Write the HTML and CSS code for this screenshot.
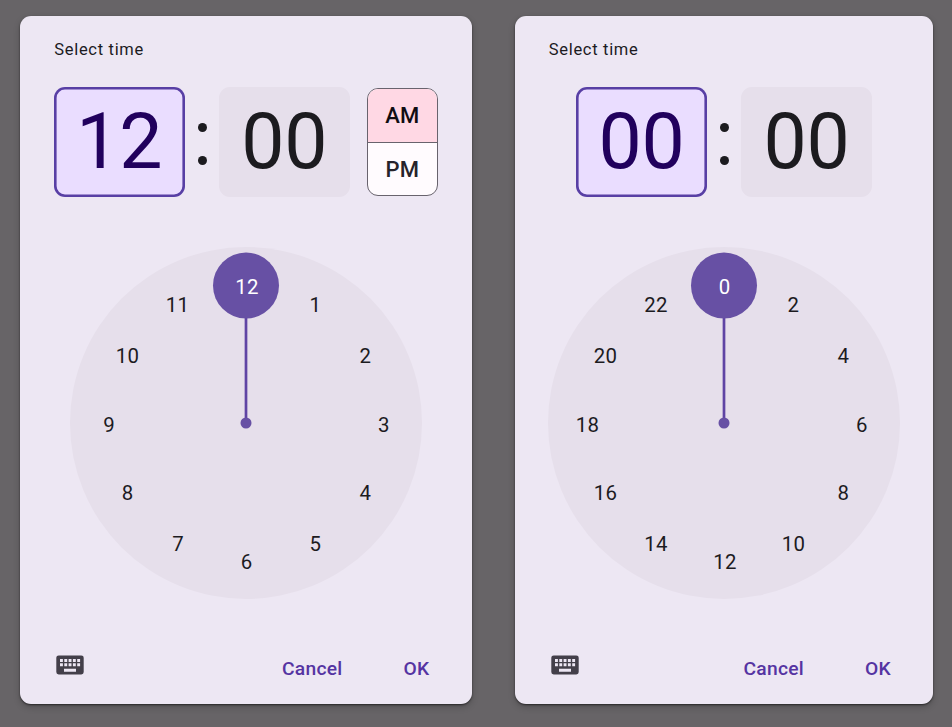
FILE: index.html
```html
<!DOCTYPE html>
<html lang="en">
<head>
<meta charset="utf-8">
<title>Select time</title>
<link rel="stylesheet" href="styles.css">
</head>
<body>
<svg width="0" height="0" class="defs" aria-hidden="true">
  <symbol id="keyboard" viewBox="0 0 28 20">
    <rect x="0.3" y="0.4" width="27.4" height="19" rx="2.4" fill="#433f49"/>
    <path fill="#ede7f3" d="M4 4h2.9v3H4zM8.3 4h2.9v3H8.3zM12.6 4h2.9v3h-2.9zM16.9 4h2.9v3h-2.9zM21.2 4h2.9v3h-2.9zM4 8.3h2.9v3H4zM8.3 8.3h2.9v3H8.3zM12.6 8.3h2.9v3h-2.9zM16.9 8.3h2.9v3h-2.9zM21.2 8.3h2.9v3h-2.9zM8 13.8h12v3H8z"/>
  </symbol>
</svg>
<main class="stage">
  <section class="dialog dialog-12h">
    <h1 class="title">Select time</h1>
    <div class="time-row">
      <div class="field selected">12</div>
      <div class="colon"><i></i><i></i></div>
      <div class="field">00</div>
      <div class="period"><div class="am">AM</div><div class="pm">PM</div></div>
    </div>
    <svg class="dial" viewBox="-176 -176 352 352">
      <circle class="face" r="176"/>
      <path class="hand" d="M0 0V-110"/>
      <circle class="knob" r="5.5"/>
      <circle class="knob" cy="-137.5" r="33"/>
      <text class="on" x="1" y="-129">12</text>
      <text x="69.5" y="-111">1</text>
      <text x="119.5" y="-60.5">2</text>
      <text x="138" y="8.5">3</text>
      <text x="119.5" y="77">4</text>
      <text x="69.5" y="127.5">5</text>
      <text x="0.5" y="146">6</text>
      <text x="-68" y="127.5">7</text>
      <text x="-118.5" y="77">8</text>
      <text x="-137" y="8.5">9</text>
      <text x="-118.5" y="-60.5">10</text>
      <text x="-68.5" y="-111">11</text>
    </svg>
    <div class="actions">
      <svg class="keyboard"><use href="#keyboard"/></svg>
      <span class="button cancel">Cancel</span>
      <span class="button">OK</span>
    </div>
  </section>
  <section class="dialog dialog-24h">
    <h1 class="title">Select time</h1>
    <div class="time-row">
      <div class="field selected">00</div>
      <div class="colon"><i></i><i></i></div>
      <div class="field">00</div>
    </div>
    <svg class="dial" viewBox="-176 -176 352 352">
      <circle class="face" r="176"/>
      <path class="hand" d="M0 0V-110"/>
      <circle class="knob" r="5.5"/>
      <circle class="knob" cy="-137.5" r="33"/>
      <text class="on" x="0.5" y="-129">0</text>
      <text x="69.5" y="-111">2</text>
      <text x="119.5" y="-60.5">4</text>
      <text x="138" y="8.5">6</text>
      <text x="119.5" y="77">8</text>
      <text x="69.5" y="127.5">10</text>
      <text x="1" y="146">12</text>
      <text x="-68" y="127.5">14</text>
      <text x="-118.5" y="77">16</text>
      <text x="-136.5" y="8.5">18</text>
      <text x="-118.5" y="-60.5">20</text>
      <text x="-68" y="-111">22</text>
    </svg>
    <div class="actions">
      <svg class="keyboard"><use href="#keyboard"/></svg>
      <span class="button cancel">Cancel</span>
      <span class="button">OK</span>
    </div>
  </section>
</main>
</body>
</html>
```
FILE: styles.css
```css
* { box-sizing: border-box; }
body {
  margin: 0;
  background: #676467;
  font-family: Roboto, sans-serif;
  color: #1c1b1f;
}
.defs { display: block; }
.stage {
  display: flex;
  height: 727px;
  padding: 15.5px 0 0 20.3px;
  gap: 43px;
  overflow: hidden;
}
.dialog {
  display: flex;
  flex-direction: column;
  height: 688.5px;
  padding: 23.5px 34px 0;
  border-radius: 11px;
  background: #ede7f3;
  box-shadow: 0 1px 2px rgba(0, 0, 0, .55), 0 3px 7px rgba(0, 0, 0, .2);
}
.dialog-12h { width: 451.5px; }
.dialog-24h { width: 418.5px; }
.title {
  margin: 0;
  font-size: 16.5px;
  line-height: 22px;
  font-weight: 400;
  letter-spacing: .69px;
}
.time-row {
  display: flex;
  align-items: flex-start;
  justify-content: center;
  margin-top: 26.3px;
  height: 110px;
}
.dialog-12h .time-row { justify-content: flex-start; }
.field {
  width: 131.5px;
  height: 109.8px;
  border-radius: 11px;
  background: #e6dfeb;
  font-size: 77px;
  line-height: 110px;
  text-align: center;
  letter-spacing: -.25px;
}
.field.selected {
  box-shadow: inset 0 0 0 2.6px #583fa4;
  background: #eaddff;
  color: #21005d;
}
.dialog-12h .selected { padding-right: 1px; }
.colon {
  display: flex;
  flex-direction: column;
  align-items: center;
  gap: 24.2px;
  width: 33.5px;
  padding-top: 35.7px;
}
.colon i {
  width: 9px;
  height: 9px;
  border-radius: 50%;
  background: #1c1b1f;
}
.period {
  width: 71px;
  height: 108.5px;
  margin: .4px 0 0 17.1px;
  border: 1px solid #68636d;
  border-radius: 11px;
  overflow: hidden;
  font-size: 22px;
  font-weight: 480;
  letter-spacing: .2px;
  text-align: center;
  background: #fffbfe;
}
.am {
  height: 54px;
  border-bottom: 1px solid #68636d;
  background: #ffd8e4;
  color: #100c12;
  line-height: 54px;
}
.pm { line-height: 53px; color: #26232b; }
.dial {
  align-self: center;
  flex: none;
  width: 352px;
  height: 352px;
  margin-top: 49.7px;
}
.dial text {
  fill: #1c1b1f;
  font-size: 20.4px;
  letter-spacing: .3px;
  text-anchor: middle;
}
.dial .on { fill: #fff; }
.face { fill: #e6dfeb; }
.knob { fill: #6750a4; }
.hand { stroke: #5f44a4; stroke-width: 2.7px; }
.actions {
  display: flex;
  margin-top: 56px;
  padding: 0 8.5px 0 1.8px;
}
.keyboard { width: 28px; height: 20px; }
.button {
  font-size: 19.25px;
  line-height: 28px;
  font-weight: 480;
  letter-spacing: .24px;
  color: #5534a2;
}
.cancel { margin-left: auto; margin-right: 61px; }
```
